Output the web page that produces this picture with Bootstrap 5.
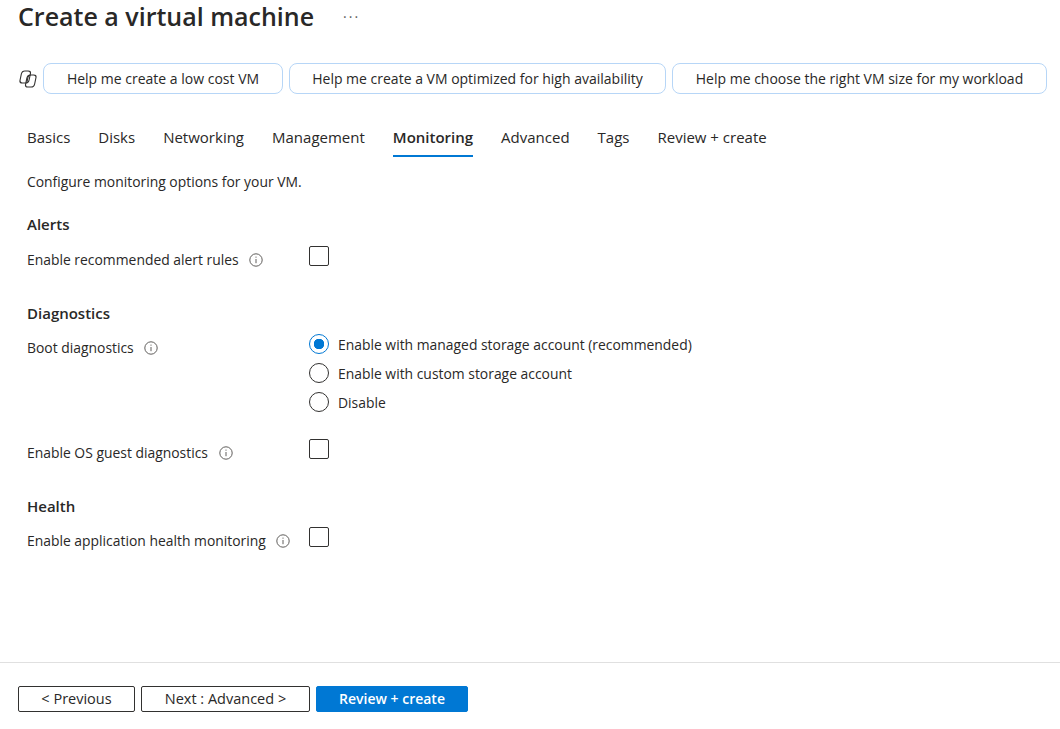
<!DOCTYPE html>
<html lang="en">
<head>
  <meta charset="UTF-8">
  <title>Create a virtual machine</title>
  <link href="https://cdn.jsdelivr.net/npm/bootstrap@5.3.0/dist/css/bootstrap.min.css" rel="stylesheet">
  <style>
    html, body { height: 100%; }
    body { font-family: "Open Sans", "Liberation Sans", sans-serif; font-size: 13.9px; line-height: 20px; color: #292827; overflow: hidden; }
    .title-row { padding-left: 18px; }
    .page-title { font-size: 25px; font-weight: 600; line-height: 32px; margin: 0 0 2px; color: #292827; }
    .title-more { margin-left: 29px; font-size: 14px; line-height: 34px; letter-spacing: 2px; color: #605e5c; }
    .chip-row { margin-top: 29px; padding-left: 19px; gap: 6px; }
    .chip { height: 31px; padding: 0; font-size: 14px; color: #292827; background: #fff; border: 1px solid #b7d6f7; border-radius: 8px; }
    .chip-a { width: 240px; }
    .chip-b { width: 377px; }
    .chip-c { width: 375px; }
    .tab-row { margin-top: 28px; padding-left: 27px; gap: 28px; }
    .tab-item { height: 35px; padding: 5px 0 0; font-size: 15px; color: #292827; text-decoration: none; }
    .tab-item.is-active { font-weight: 600; border-bottom: 2px solid #0078d4; }
    .form-area { padding-left: 27px; }
    .form-desc { margin-top: 15px; }
    .group-head { font-size: 15px; font-weight: 600; line-height: 18px; height: 20px; margin-bottom: 11px; }
    .group-alerts { margin-top: 23px; }
    .group-diag { margin-top: 34px; margin-bottom: 10px; }
    .field-row { display: flex; }
    .field-label { width: 282px; padding-top: 4px; height: 24px; }
    .field-label svg { margin-left: 7px; vertical-align: -2px; }
    .form-check-input.box { width: 20px; height: 20px; margin: 0; border: 1px solid #323130; border-radius: 2px; }
    .form-check-input.round { width: 20px; height: 20px; margin: 0; border: 1px solid #323130; }
    .form-check-input.round:checked { background: radial-gradient(circle, #0078d4 5px, #fff 5.5px); border-color: #0078d4; }
    .radio-stack { gap: 7px; }
    .radio-line { gap: 9px; line-height: 22px; }
    .row-os { margin-top: 25px; }
    .footer-bar { border-top: 1px solid #e0e0e0; height: 67px; padding: 23px 0 0 18px; gap: 6px; }
    .foot-btn { height: 26px; padding: 0; font-size: 14.5px; line-height: 24px; border: 1px solid #323130; border-radius: 2px; color: #292827; background: #fff; }
    .foot-prev { width: 117px; }
    .foot-next { width: 169px; }
    .foot-main { width: 152px; font-size: 14px; font-weight: 600; color: #fff; background: #0078d4; border-color: #0078d4; }
  </style>
</head>
<body class="d-flex flex-column">
  <main class="flex-grow-1">
    <div class="title-row d-flex">
      <h1 class="page-title">Create a virtual machine</h1>
      <span class="title-more">···</span>
    </div>

    <div class="chip-row d-flex align-items-center">
      <svg width="18" height="18" viewBox="0 0 18 18" fill="none" stroke="#323130" stroke-width="1.100" stroke-linejoin="round">
        <rect x="3.200" y="1" width="9" height="12" rx="2.800" transform="skewX(-12)"/>
        <rect x="9.600" y="5" width="9" height="12" rx="2.800" transform="skewX(-12)"/>
        <path d="M11.500 5c-1.500.2-2.300 1.100-2.600 2.400L7.800 13"/>
      </svg>
      <button type="button" class="btn chip chip-a">Help me create a low cost VM</button>
      <button type="button" class="btn chip chip-b">Help me create a VM optimized for high availability</button>
      <button type="button" class="btn chip chip-c">Help me choose the right VM size for my workload</button>
    </div>

    <nav class="tab-row d-flex">
      <a class="tab-item" href="#">Basics</a>
      <a class="tab-item" href="#">Disks</a>
      <a class="tab-item" href="#">Networking</a>
      <a class="tab-item" href="#">Management</a>
      <a class="tab-item is-active" href="#">Monitoring</a>
      <a class="tab-item" href="#">Advanced</a>
      <a class="tab-item" href="#">Tags</a>
      <a class="tab-item" href="#">Review + create</a>
    </nav>

    <div class="form-area">
      <div class="form-desc">Configure monitoring options for your VM.</div>

      <div class="group-head group-alerts">Alerts</div>
      <div class="field-row">
        <div class="field-label">Enable recommended alert rules <svg width="14" height="14" viewBox="0 0 14 14" fill="none" stroke="#605e5c"><circle cx="7" cy="7" r="6.200"/><path d="M7 6v4.200M7 3.600v1.100"/></svg></div>
        <input class="form-check-input box" type="checkbox" aria-label="Enable recommended alert rules">
      </div>

      <div class="group-head group-diag">Diagnostics</div>
      <div class="field-row">
        <div class="field-label">Boot diagnostics <svg width="14" height="14" viewBox="0 0 14 14" fill="none" stroke="#605e5c"><circle cx="7" cy="7" r="6.200"/><path d="M7 6v4.200M7 3.600v1.100"/></svg></div>
        <div class="radio-stack d-flex flex-column">
          <label class="radio-line d-flex"><input class="form-check-input round" type="radio" name="boot" checked>Enable with managed storage account (recommended)</label>
          <label class="radio-line d-flex"><input class="form-check-input round" type="radio" name="boot">Enable with custom storage account</label>
          <label class="radio-line d-flex"><input class="form-check-input round" type="radio" name="boot">Disable</label>
        </div>
      </div>
      <div class="field-row row-os">
        <div class="field-label">Enable OS guest diagnostics <svg width="14" height="14" viewBox="0 0 14 14" fill="none" stroke="#605e5c"><circle cx="7" cy="7" r="6.200"/><path d="M7 6v4.200M7 3.600v1.100"/></svg></div>
        <input class="form-check-input box" type="checkbox" aria-label="Enable OS guest diagnostics">
      </div>

      <div class="group-head group-diag">Health</div>
      <div class="field-row">
        <div class="field-label">Enable application health monitoring <svg width="14" height="14" viewBox="0 0 14 14" fill="none" stroke="#605e5c"><circle cx="7" cy="7" r="6.200"/><path d="M7 6v4.200M7 3.600v1.100"/></svg></div>
        <input class="form-check-input box" type="checkbox" aria-label="Enable application health monitoring">
      </div>
    </div>
  </main>

  <footer class="footer-bar d-flex align-items-start">
    <button type="button" class="btn foot-btn foot-prev">&lt; Previous</button>
    <button type="button" class="btn foot-btn foot-next">Next : Advanced &gt;</button>
    <button type="button" class="btn foot-btn foot-main">Review + create</button>
  </footer>
</body>
</html>
